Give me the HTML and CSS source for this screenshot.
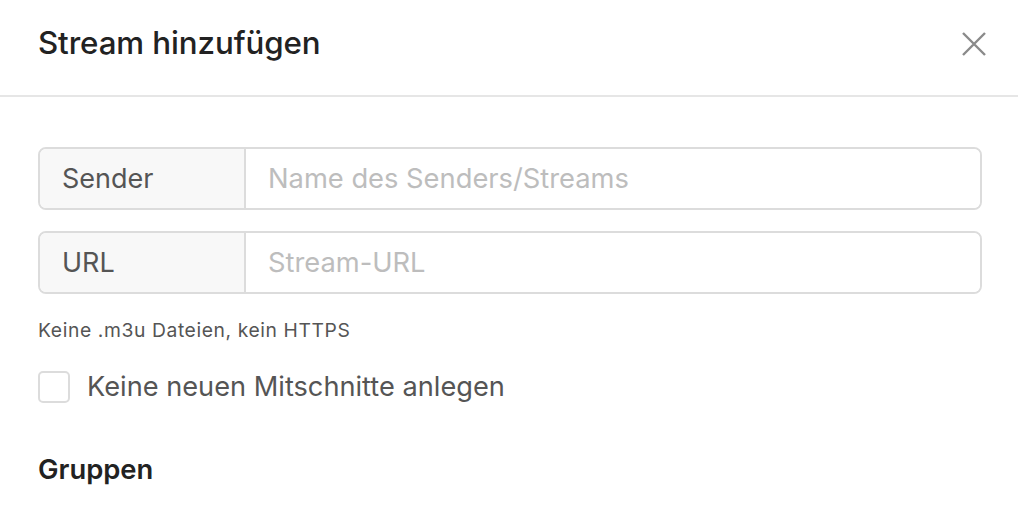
FILE: index.html
```html
<!DOCTYPE html>
<html lang="de">
<head>
<meta charset="utf-8">
<link rel="stylesheet" href="styles.css">
</head>
<body>
<div class="modal">
  <header class="modal-header">
    <h1 class="title">Stream hinzufügen</h1>
    <button class="close" aria-label="Schließen">
      <svg width="24" height="24" viewBox="0 0 24 24"><path d="M1 1L23 23M23 1L1 23" stroke="#8a8a8a" stroke-width="2.4" fill="none"/></svg>
    </button>
  </header>
  <div class="modal-body">
    <div class="input-group">
      <span class="addon">Sender</span>
      <input class="field" type="text" placeholder="Name des Senders/Streams">
    </div>
    <div class="input-group">
      <span class="addon">URL</span>
      <input class="field" type="text" placeholder="Stream-URL">
    </div>
    <p class="help">Keine .m3u Dateien, kein HTTPS</p>
    <label class="check">
      <span class="box"></span>
      <span class="check-label">Keine neuen Mitschnitte anlegen</span>
    </label>
    <h2 class="section">Gruppen</h2>
  </div>
</div>
</body>
</html>
```

FILE: styles.css
```css
* { box-sizing: border-box; }
html, body { margin: 0; padding: 0; background: #fff; }
body { font-family: "Inter", "Liberation Sans", sans-serif; color: #222; overflow: hidden; }
.modal { width: 1018px; }
.modal-header {
  height: 97px;
  border-bottom: 2px solid #e6e6e6;
  display: flex;
  align-items: flex-start;
  justify-content: space-between;
  padding: 24px 32px 0 38px;
}
.title { margin: 0; font-size: 31.3px; line-height: 38px; font-weight: 500; color: #222; letter-spacing: -0.1px; }
.close { background: none; border: 0; padding: 0; margin-top: 8px; width: 24px; height: 24px; display: flex; }
.modal-body { padding: 50px 36px 0 38px; }
.input-group {
  display: flex;
  height: 63px;
  border: 2px solid #dcdcdc;
  border-radius: 8px;
  overflow: hidden;
  margin-bottom: 21px;
}
.input-group + .input-group { margin-bottom: 0; }
.addon {
  width: 206px;
  background: #f8f8f8;
  border-right: 2px solid #dcdcdc;
  display: flex;
  align-items: center;
  padding-left: 22px;
  font-size: 27px;
  color: #555;
}
.field {
  flex: 1;
  border: 0;
  outline: none;
  padding: 0 22px;
  font-family: inherit;
  font-size: 27.3px;
  color: #555;
  background: #fff;
}
.field::placeholder { color: #bdbdbd; }
.help { margin: 24px 0 0; font-size: 19.3px; line-height: 24px; letter-spacing: 0.6px; color: #555; }
.check { display: flex; align-items: center; gap: 17px; margin-top: 29px; height: 32px; }
.box { flex: none; width: 32px; height: 32px; border: 2px solid #dcdcdc; border-radius: 5px; background: #fff; }
.check-label { font-size: 27.2px; line-height: 32px; color: #555; }
.section { margin: 50px 0 0; font-size: 27.4px; line-height: 32px; font-weight: 600; color: #222; }
```
